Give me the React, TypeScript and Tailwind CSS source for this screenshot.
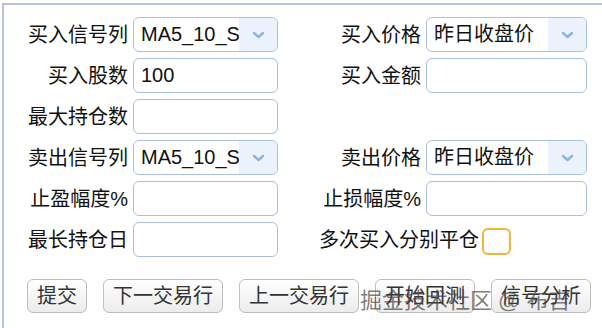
import React from 'react'

const FONT = "font-['Liberation_Sans','Noto_Sans_CJK_SC',sans-serif]"

function Select({ value }: { value: string }) {
  return (
    <div className="flex h-[35px] w-full overflow-hidden rounded-[6px] border border-[#a9c0e0] bg-white">
      <div className="flex-1 overflow-hidden whitespace-nowrap pl-[7px] pr-[2px] leading-[33px]">{value}</div>
      <div className="flex w-[38px] items-center justify-center bg-[#ebf2fc]">
        <svg width="13" height="8" viewBox="0 0 13 8">
          <path d="M2 2 L6.5 6 L11 2" fill="none" stroke="#8cb4e2" strokeWidth="2.4" strokeLinecap="round" strokeLinejoin="round" />
        </svg>
      </div>
    </div>
  )
}

function Input({ value = '' }: { value?: string }) {
  return (
    <div className="h-[35px] w-full overflow-hidden whitespace-nowrap rounded-[6px] border border-[#a9c0e0] bg-white pl-[7px] leading-[33px]">
      {value}
    </div>
  )
}

function Label({ text }: { text: string }) {
  return <div className="whitespace-nowrap text-right">{text}</div>
}

const BUTTONS = ['提交', '下一交易行', '上一交易行', '开始回测', '信号分析']

export default function App() {
  return (
    <div className={`relative h-[328px] w-[602px] overflow-hidden bg-white text-[20px] text-[#111] ${FONT}`}>
      <div className="ml-[2px] mt-[3px] h-[325px] border-l-2 border-t-2 border-[#b3c5e0] pl-[21px] pt-[12px]">
        <div className="grid grid-cols-[103px_145px_138px_161px] items-center gap-x-[5px] gap-y-[6px]">
          <Label text="买入信号列" />
          <Select value="MA5_10_SMA" />
          <Label text="买入价格" />
          <Select value="昨日收盘价" />

          <Label text="买入股数" />
          <Input value="100" />
          <Label text="买入金额" />
          <Input />

          <Label text="最大持仓数" />
          <Input />
          <div className="col-span-2 h-[35px]" />

          <Label text="卖出信号列" />
          <Select value="MA5_10_SMA" />
          <Label text="卖出价格" />
          <Select value="昨日收盘价" />

          <Label text="止盈幅度%" />
          <Input />
          <Label text="止损幅度%" />
          <Input />

          <Label text="最长持仓日" />
          <Input />
          <div className="col-span-2 flex h-[35px] items-center pl-[36px]">
            <span className="whitespace-nowrap">多次买入分别平仓</span>
            <span className="ml-[3px] mt-[4px] h-[27px] w-[29px] rounded-[6px] border-2 border-[#f0b43c] bg-white" />
          </div>
        </div>

        <div className="mt-[22px] flex gap-[16px] pl-[2px]">
          {BUTTONS.map((b) => (
            <button
              key={b}
              className="h-[34px] rounded-[6px] border border-[#bdbdbd] bg-gradient-to-b from-white to-[#ececec] px-[9px] text-[20px] leading-[32px] text-[#333]"
            >
              {b}
            </button>
          ))}
        </div>
      </div>

      <div className="pointer-events-none absolute left-[360px] top-[284px] whitespace-nowrap text-[22px] text-[#444]/70">
        掘金技术社区 @ 布吉
      </div>
    </div>
  )
}
